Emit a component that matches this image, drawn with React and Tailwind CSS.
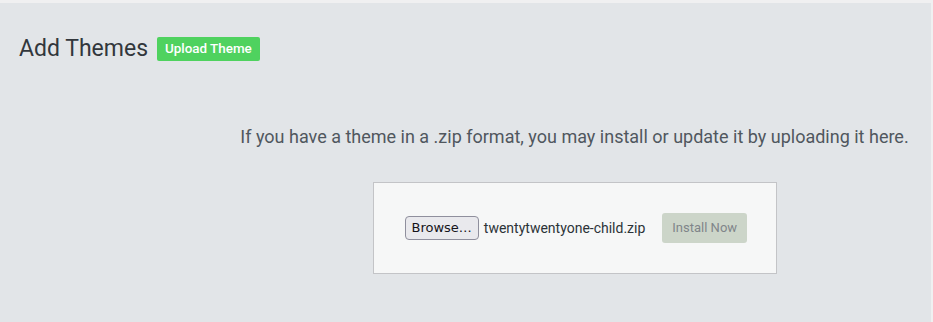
export default function App() {
  return (
    <div className="w-[933px] h-[322px] bg-[#f0f0f1] pt-[3px] pr-[2px] font-['Roboto',sans-serif]">
      <div className="h-[319px] bg-[#e2e5e8]">
        {/* Header */}
        <div className="flex items-center gap-[9px] pl-[19px] pt-[30px]">
          <h1 className="text-[23px] leading-[32px] text-[#32373c] font-normal">Add Themes</h1>
          <button className="h-[24px] px-[8px] rounded-[2px] bg-[#4fd25f] text-white text-[13.4px] font-medium leading-[24px]">
            Upload Theme
          </button>
        </div>

        {/* Upload panel */}
        <div className="flex flex-col items-center ml-[218px] pt-[59px]">
          <p className="text-[18px] leading-[26px] text-[#50575e]">
            If you have a theme in a .zip format, you may install or update it by uploading it here.
          </p>
          <div className="mt-[32px] w-[404px] h-[92px] bg-[#f6f7f7] border border-[#c3c4c7] flex items-center pl-[31px]">
            <button className="h-[24px] px-[6px] rounded-[4px] border border-[#8f8f9d] bg-[#e9e9ed] text-[13px] text-[#15141a] font-['DejaVu_Sans',sans-serif] leading-[20px]">
              Browse…
            </button>
            <span className="ml-[5px] text-[14px] text-[#2c3338]">twentytwentyone-child.zip</span>
            <button className="ml-[17px] h-[30px] px-[10px] rounded-[3px] bg-[#ccd5c9] text-[13px] text-[#80858a]">
              Install Now
            </button>
          </div>
        </div>
      </div>
    </div>
  );
}
